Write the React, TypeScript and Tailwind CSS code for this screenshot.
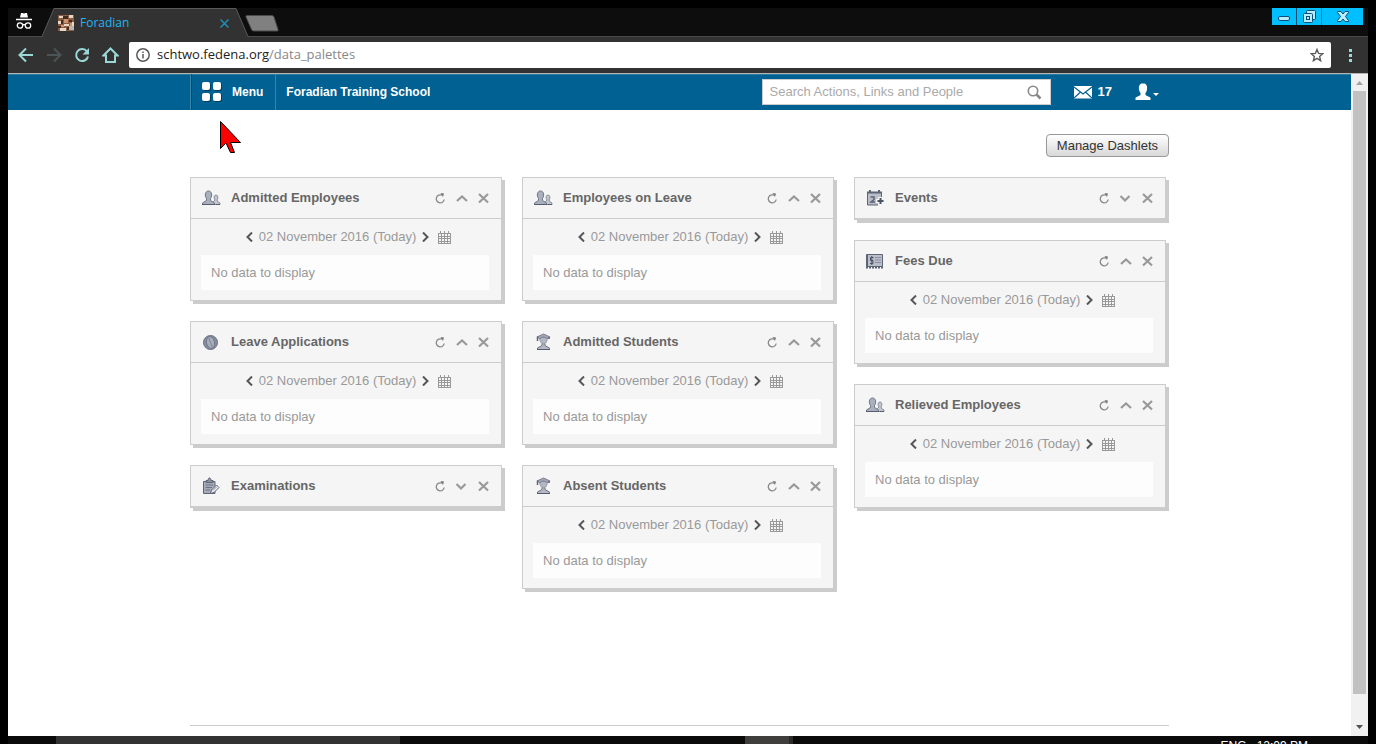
import React, { useState } from 'react';

type IconName = 'people' | 'leaf' | 'clipboard' | 'student' | 'calendar' | 'fees';

interface Dashlet {
  title: string;
  icon: IconName;
  open: boolean;
}

const columns: Dashlet[][] = [
  [
    { title: 'Admitted Employees', icon: 'people', open: true },
    { title: 'Leave Applications', icon: 'leaf', open: true },
    { title: 'Examinations', icon: 'clipboard', open: false },
  ],
  [
    { title: 'Employees on Leave', icon: 'people', open: true },
    { title: 'Admitted Students', icon: 'student', open: true },
    { title: 'Absent Students', icon: 'student', open: true },
  ],
  [
    { title: 'Events', icon: 'calendar', open: false },
    { title: 'Fees Due', icon: 'fees', open: true },
    { title: 'Relieved Employees', icon: 'people', open: true },
  ],
];

function DashletIcon({ name }: { name: IconName }) {
  return (
    <svg width="20" height="18" viewBox="0 0 20 18" className="shrink-0" aria-hidden="true">
      {name === 'people' && (
        <g>
          <path d="M12.500 15.500v-3l1.500-1.500c-1.500-2-1-5 1-5s2.500 3 1 5l0.500 1.500 2.500 1.500v1.500z" fill="#c3c7d0" stroke="#868c9b" />
          <path d="M1.500 15.500v-1.500l4-2.500v-2c-2-2.500-1.500-7.500 2-7.500s4 5 2 7.500v2l4 2.500v1.500z" fill="#a9afbb" stroke="#6d7484" />
          <path d="M1 15.500h13M15 15.500h4" stroke="#555c6e" />
        </g>
      )}
      {name === 'leaf' && (
        <g>
          <circle cx="9.500" cy="9.500" r="7" fill="#868d9e" stroke="#6a7183" />
          <ellipse cx="9.500" cy="9.500" rx="4" ry="6" fill="#a7adba" stroke="#737a8b" transform="rotate(-12 9.500 9.500)" />
          <path d="M8 4.500c0 4 3 6 3 10" fill="none" stroke="#7d8495" />
        </g>
      )}
      {name === 'clipboard' && (
        <g>
          <path d="M2.500 4.500v12h11.500V4.500z" fill="#a6acba" stroke="#5d6475" />
          <path d="M5 5.500V3.500h2c0-3.500 3-3.500 3 0h2v2z" fill="#8c93a3" stroke="#5d6475" />
          <path d="M4.500 8h7.500M4.500 10.500h6.500M4.500 13h4.500" stroke="#6c7385" />
          <path d="M9.500 16.500l1-3.500 5-5 2.500 2.500-5 5z" fill="#f0f1f3" stroke="#5d6475" />
          <path d="M12 13.500l4-4" stroke="#8b92a3" />
        </g>
      )}
      {name === 'student' && (
        <g>
          <path d="M4.500 16.500v-1.500l4.500-2.500v-2h3v2l4.500 2.500v1.500z" fill="#b3b8c4" stroke="#6d7484" />
          <path d="M4 16.500h13" stroke="#555c6e" />
          <path d="M6.500 4h8c0 3-1.500 7-4 7s-4-4-4-7z" fill="#b3b8c4" stroke="#8a90a0" />
          <path d="M4 4l6.500-3L17 4l-2.500 1.500-4-1.500-4 1.500z" fill="#a0a6b4" stroke="#7a8190" />
          <path d="M4.500 3.500v4.500M16 4v2" stroke="#5d6475" strokeWidth="1.500" />
        </g>
      )}
      {name === 'calendar' && (
        <g>
          <path d="M2.500 3.500h14v12.500h-14z" fill="#b9bec8" stroke="#5d6475" />
          <path d="M2 2.500h15v2H2zM4 1h2v3H4zM13 1h2v3h-2z" fill="#5d6475" />
          <path d="M5.500 8h3.500v2.500L6 13h4" fill="none" stroke="#5d6475" strokeWidth="1.500" />
          <path d="M13 8h4v2h2.500v4H17v3h-4v-3h-2v-4h2z" fill="#f4f4f4" />
          <path d="M15.500 9v6M12.500 12h6" stroke="#4c5366" strokeWidth="2" />
        </g>
      )}
      {name === 'fees' && (
        <g>
          <path d="M1.500 2.500h16v12h-16z" fill="#b9bec8" stroke="#5d6475" />
          <path d="M2 3h1v11H2z" fill="#5d6475" />
          <path d="M1 15.500h17" stroke="#5d6475" strokeWidth="2" strokeDasharray="2 1" />
          <path d="M8.500 5.500H5.500v3H8v3H5M6.800 4v9" fill="none" stroke="#4c5366" />
          <path d="M10 5.500h6M10 8h6M10 10.500h6" stroke="#8a90a0" />
        </g>
      )}
    </svg>
  );
}

function DateRow() {
  return (
    <div className="flex h-9 items-center justify-center pl-1.5 text-[13px] text-[#999]">
      <button aria-label="Previous day">
        <svg width="8" height="10" viewBox="0 0 8 10" fill="none" stroke="#555" strokeWidth="2">
          <path d="M7 0.500L2.500 5 7 9.500" />
        </svg>
      </button>
      <span className="ml-1.5">02 November 2016 (Today)</span>
      <button className="ml-1.5" aria-label="Next day">
        <svg width="8" height="10" viewBox="0 0 8 10" fill="none" stroke="#555" strokeWidth="2">
          <path d="M1 0.500L5.500 5 1 9.500" />
        </svg>
      </button>
      <button className="ml-2" aria-label="Pick a date">
        <svg width="13" height="13" viewBox="0 0 13 13" fill="none" stroke="#999" shapeRendering="crispEdges">
          <path d="M0.500 2.500h12v10H0.500zM0.500 5.500h12M0.500 7.500h12M0.500 10.500h12M3.500 3v10M6.500 3v10M9.500 3v10" />
          <path d="M2.500 0v3M6.500 0v3M10.500 0v3" />
        </svg>
      </button>
    </div>
  );
}

function DashletCard({ dashlet }: { dashlet: Dashlet }) {
  const [open, setOpen] = useState(dashlet.open);

  return (
    <section className="border border-[#ccc] bg-[#f5f5f5] shadow-[3px_3px_0_#ccc]">
      <header className="flex h-[41px] items-center border-b border-[#ccc] pr-3 pl-2.5">
        <DashletIcon name={dashlet.icon} />
        <h2 className="ml-2.5 text-[13px] font-bold text-[#666]">{dashlet.title}</h2>
        <div className="ml-auto flex items-center gap-2.5">
          <button aria-label={`Refresh ${dashlet.title}`}>
            <svg width="11" height="12" viewBox="0 0 11 12" fill="none">
              <path d="M7 3.200A4 4 0 1 0 9.200 7.500" stroke="#888" strokeWidth="1.300" />
              <path d="M5.500 1l3.500 0.500L8 5z" fill="#777" />
            </svg>
          </button>
          <button onClick={() => setOpen(!open)} aria-label={`Toggle ${dashlet.title}`}>
            <svg width="12" height="12" viewBox="0 0 12 12" fill="none" stroke="#999" strokeWidth="2.200">
              <path d={open ? 'M1 9L6 4.500l5 4.500' : 'M0.500 4l4.500 4.500L9.500 4'} />
            </svg>
          </button>
          <button aria-label={`Close ${dashlet.title}`}>
            <svg width="11" height="12" viewBox="0 0 11 12" fill="none" stroke="#999" strokeWidth="2.200">
              <path d="M1 2l9 8.500M10 2l-9 8.500" />
            </svg>
          </button>
        </div>
      </header>
      {open && (
        <div className="pr-3 pb-2.5 pl-2.5">
          <DateRow />
          <p className="bg-[#fdfdfd] px-2.5 text-[13px] leading-[35px] text-[#999]">No data to display</p>
        </div>
      )}
    </section>
  );
}

function TabStrip() {
  return (
    <div className="flex h-[29px] bg-[#0d0d0d] shadow-[inset_0_-1px_0_#4a4a4a]">
      <svg width="18" height="18" viewBox="0 0 18 18" className="mt-1 ml-[7px]" fill="none">
        <path d="M5 5.500L6 1h1.500L9 1.500 10.500 1H12l1 4.500z" fill="#fff" />
        <path d="M1 7.500h16" stroke="#fff" strokeWidth="1.500" />
        <circle cx="5" cy="13.500" r="2.700" stroke="#fff" strokeWidth="1.300" />
        <circle cx="13" cy="13.500" r="2.700" stroke="#fff" strokeWidth="1.300" />
        <path d="M7.500 13c1-0.700 2-0.700 3 0" stroke="#fff" strokeWidth="1.300" />
      </svg>
      <div className="ml-2 flex">
        <svg width="14" height="29" viewBox="0 0 14 29">
          <path d="M1 29L13 0.500h1V29z" fill="#323232" />
          <path d="M0 28.500h1L13 0.500h1" fill="none" stroke="#5a5a5a" />
        </svg>
        <div className="flex w-[180px] items-center border-t border-[#5a5a5a] bg-[#323232]">
          <svg width="16" height="16" viewBox="0 0 16 16" className="ml-[3px]">
            <path d="M0 0h16v16H0z" fill="#8c5d45" />
            <path d="M1 1h4v2H1zM11 0h4v3h-4zM0 6h3v3H0zM6 9h5v2H6zM2 13h6v3H2zM14 7h2v4h-2z" fill="#e8d6c4" />
            <path d="M5 1h5v3H5zM3 5h2v4H3zM11 5h3v2h-3zM0 11h3v2H0zM9 12h2v3H9z" fill="#44291f" />
            <path d="M6 4h4v4H6zM12 8h2v3h-2zM3 10h3v2H3z" fill="#cf9269" />
            <path d="M11 11h5v4h-5z" fill="#b9b4ad" />
          </svg>
          <span className="ml-1.5 font-['Open_Sans',sans-serif] text-[12px] text-[#1fb4f4]">Foradian</span>
          <button className="mr-1.5 ml-auto" aria-label="Close tab">
            <svg width="9" height="9" viewBox="0 0 9 9" stroke="#1b8fb8" strokeWidth="1.500">
              <path d="M0.500 0.500l8 8M8.500 0.500l-8 8" />
            </svg>
          </button>
        </div>
        <svg width="14" height="29" viewBox="0 0 14 29">
          <path d="M0 29V0.500h1L13 29z" fill="#323232" />
          <path d="M0 0.500h1L13 28.500h1" fill="none" stroke="#5a5a5a" />
        </svg>
      </div>
      <button className="mt-[7px] -ml-1 self-start" aria-label="New tab">
        <svg width="34" height="17" viewBox="0 0 34 17">
          <path d="M2 0.500h24.500c1.500 0 2 0.500 2.500 1.500l4 12.500c0.500 1.200 0 1.500-1 1.500H9c-1.500 0-2-0.500-2.500-1.500L1 2c-0.400-1 0-1.500 1-1.500z" fill="#808080" stroke="#4a4a4a" />
        </svg>
      </button>
      <div className="ml-auto flex h-[17px] pr-[5px]">
        <button className="flex w-6 items-end justify-center bg-[#00bfff] pb-1" aria-label="Minimize">
          <svg width="12" height="5" viewBox="0 0 12 5">
            <rect x="0.500" y="0.500" width="11" height="4" rx="1.500" fill="#b8ecff" stroke="#0a4f73" />
          </svg>
        </button>
        <button className="flex w-[25px] items-center justify-center border-l border-[#0a4f73] bg-[#00bfff]" aria-label="Restore">
          <svg width="13" height="13" viewBox="0 0 13 13" fill="#b8ecff" stroke="#0a4f73">
            <rect x="3.500" y="0.500" width="9" height="9" rx="1" />
            <rect x="0.500" y="3.500" width="9" height="9" rx="1" />
            <rect x="3.500" y="6.500" width="3" height="3" />
          </svg>
        </button>
        <button className="flex w-[42px] items-center justify-center border-l border-[#0a7fab] bg-[#00bfff]" aria-label="Close window">
          <svg width="12" height="11" viewBox="0 0 12 11">
            <path d="M0.500 0.500h3.500l2 2.500 2-2.500h3.500v1L8.500 5.500l3 4v1H8l-2-2.500-2 2.500H0.500v-1l3-4-3-4z" fill="#b8ecff" stroke="#0a4f73" />
          </svg>
        </button>
      </div>
    </div>
  );
}

function Toolbar() {
  return (
    <div className="flex h-[37px] items-center border-b border-[#b5b5b0] bg-[#323232] pl-2.5">
      <div className="flex items-center gap-3">
        <button aria-label="Back">
          <svg width="16" height="16" viewBox="0 0 16 16" fill="none" stroke="#9ad7d7" strokeWidth="2">
            <path d="M15 8H2M8 1.500L1.500 8 8 14.500" />
          </svg>
        </button>
        <button aria-label="Forward">
          <svg width="16" height="16" viewBox="0 0 16 16" fill="none" stroke="#4d5456" strokeWidth="2">
            <path d="M1 8h13M8 1.500L14.500 8 8 14.500" />
          </svg>
        </button>
        <button aria-label="Reload">
          <svg width="16" height="16" viewBox="0 0 16 16">
            <path d="M13 4.500A6 6 0 1 0 14 9.500" fill="none" stroke="#9ad7d7" strokeWidth="2" />
            <path d="M15 1v6.500H8.500z" fill="#9ad7d7" />
          </svg>
        </button>
        <button aria-label="Home">
          <svg width="17" height="16" viewBox="0 0 17 16" fill="none" stroke="#9ad7d7" strokeWidth="2">
            <path d="M1.500 8.500l7-7 7 7H13V15H4V8.500z" />
          </svg>
        </button>
      </div>
      <div className="ml-2.5 flex h-[26px] flex-1 items-center rounded-xs bg-white px-[7px] font-['Open_Sans',sans-serif] text-[13px]">
        <svg width="14" height="14" viewBox="0 0 14 14" fill="none" stroke="#5a5a5a" strokeWidth="1.500">
          <circle cx="7" cy="7" r="6.200" />
          <path d="M7 6v4.500M7 3.500V5" />
        </svg>
        <span className="ml-[7px] text-[#222]">schtwo.fedena.org<span className="text-[#888]">/data_palettes</span></span>
        <button className="ml-auto" aria-label="Bookmark this page">
          <svg width="14" height="14" viewBox="0 0 14 14" fill="none" stroke="#5a5a5a" strokeWidth="1.400">
            <path d="M7 1.500l1.600 3.900 4.200 0.300-3.200 2.700 1 4.300L7 10.400l-3.600 2.300 1-4.300L1.200 5.700l4.200-0.300z" />
          </svg>
        </button>
      </div>
      <button className="mr-4 ml-[18px]" aria-label="Browser menu">
        <svg width="3" height="13" viewBox="0 0 3 13" fill="#9ad7d7">
          <path d="M0 0h3v3H0zM0 5h3v3H0zM0 10h3v3H0z" />
        </svg>
      </button>
    </div>
  );
}

function SiteHeader() {
  return (
    <nav className="h-9 bg-[#006192] shadow-[inset_0_1px_0_#2a7ba4]">
      <div className="mx-auto flex h-full max-w-[979px] items-center text-[13px] font-bold text-white">
        <div className="relative h-full">
          <a href="#menu" className="flex h-full items-center border-r border-l border-[#3585ac] pr-3 pl-[11px] text-[12px] shadow-[inset_1px_0_0_#004b71]">
            <svg width="20" height="20" viewBox="0 0 20 20">
              <g fill="#00405f">
                <rect x="1" y="1" width="8" height="8" rx="2" />
                <rect x="12" y="1" width="8" height="8" rx="2" />
                <rect x="1" y="12" width="8" height="8" rx="2" />
                <rect x="12" y="12" width="8" height="8" rx="2" />
              </g>
              <g fill="#fff">
                <rect width="8" height="8" rx="2" />
                <rect x="11" width="8" height="8" rx="2" />
                <rect y="11" width="8" height="8" rx="2" />
                <rect x="11" y="11" width="8" height="8" rx="2" />
              </g>
            </svg>
            <span className="ml-2.5">Menu</span>
          </a>
          {/* Pointer */}
          <svg width="22" height="34" viewBox="0 0 22 34" className="absolute top-[47px] left-[30px] z-10">
            <path d="M0.500 0.500V27.500L6 22l4.500 9.500h4L10.500 21.500H20.500z" fill="#f00" stroke="#000" />
          </svg>
        </div>
        <a href="#home" className="ml-2.5 text-[12px]">Foradian Training School</a>
        <div className="ml-auto flex h-[26px] w-[289px] items-center border border-[#ccc] bg-white pr-2 pl-[7px]">
          <input
            type="text"
            aria-label="Search"
            placeholder="Search Actions, Links and People"
            className="min-w-0 flex-1 font-normal text-[#333] outline-none placeholder:text-[#aaa]"
          />
          <button aria-label="Run search">
            <svg width="15" height="15" viewBox="0 0 15 15" fill="none" stroke="#888">
              <circle cx="6" cy="6" r="4.700" strokeWidth="1.600" />
              <path d="M9.500 9.500l4 4" strokeWidth="2.500" />
            </svg>
          </button>
        </div>
        <a href="#messages" className="ml-[23px] flex items-center">
          <svg width="18" height="13" viewBox="0 0 18 13">
            <path d="M0 0h18v12.500H0z" fill="#fff" />
            <path d="M0 1l9 7 9-7M0 12l6.500-6M18 12l-6.500-6" fill="none" stroke="#006192" strokeWidth="1.200" />
          </svg>
          <span className="ml-1.5">17</span>
        </a>
        <button className="mr-2.5 ml-[23px] flex items-center" aria-label="Account">
          <svg width="24" height="18" viewBox="0 0 24 18" fill="#fff">
            <path d="M0.500 17v-2c0-1 3-1.500 5-3V10C4 8.500 3.500 5 4 3.500 4.500 1 6 0.500 8 0.500s3.500 0.500 4 3c0.300 2 0 5-1.500 6.500v2c2 1.500 5 2 5 3v2z" />
            <path d="M18 10h6L21 13z" />
          </svg>
        </button>
      </div>
    </nav>
  );
}

function Scrollbar() {
  return (
    <div className="flex w-[17px] shrink-0 flex-col bg-[#f1f1f1]">
      <svg width="17" height="17" viewBox="0 0 17 17" className="shrink-0">
        <path d="M5 11h7L8.500 7z" fill="#a3a3a3" />
      </svg>
      <div className="min-h-0 flex-1">
        <div className="mx-auto h-[96%] w-[13px] bg-[#c1c1c1]" />
      </div>
      <svg width="17" height="17" viewBox="0 0 17 17" className="shrink-0">
        <path d="M5 6h7l-3.500 4z" fill="#505050" />
      </svg>
    </div>
  );
}

function Taskbar() {
  return (
    <div className="flex h-2 shrink-0 overflow-hidden bg-[#0a0a0a] text-[12px] leading-4 text-white">
      <div className="ml-12 h-10 w-[344px] bg-[#323232]" />
      <div className="ml-[345px] h-10 w-12 border-r-4 border-[#2b2b2b] bg-[#403e3c]" />
      <div className="mt-0.5 mr-[60px] ml-auto flex gap-2.5">
        <span>ENG</span>
        <span>12:09 PM</span>
      </div>
    </div>
  );
}

export default function App() {
  return (
    <div className="flex h-screen flex-col overflow-hidden bg-black px-2 pt-2 font-['Liberation_Sans',Arial,sans-serif]">
      <TabStrip />
      <Toolbar />
      <div className="flex min-h-0 flex-1 bg-white">
        <div className="flex flex-1 flex-col">
          <SiteHeader />
          <main className="mx-auto flex w-full max-w-[979px] flex-1 flex-col pt-6 pb-2.5">
            <button className="h-[23px] self-end rounded border border-[#999] bg-linear-to-b from-white to-[#d8d8d8] px-2.5 text-[13px] leading-5 text-[#333]">
              Manage Dashlets
            </button>
            <div className="mt-5 mr-[3px] grid grid-cols-3 items-start gap-5">
              {columns.map((dashlets, i) => (
                <div key={i} className="flex flex-col gap-5">
                  {dashlets.map((dashlet) => (
                    <DashletCard key={dashlet.title} dashlet={dashlet} />
                  ))}
                </div>
              ))}
            </div>
            <hr className="mt-auto border-[#ccc]" />
          </main>
        </div>
        <Scrollbar />
      </div>
      <Taskbar />
    </div>
  );
}
